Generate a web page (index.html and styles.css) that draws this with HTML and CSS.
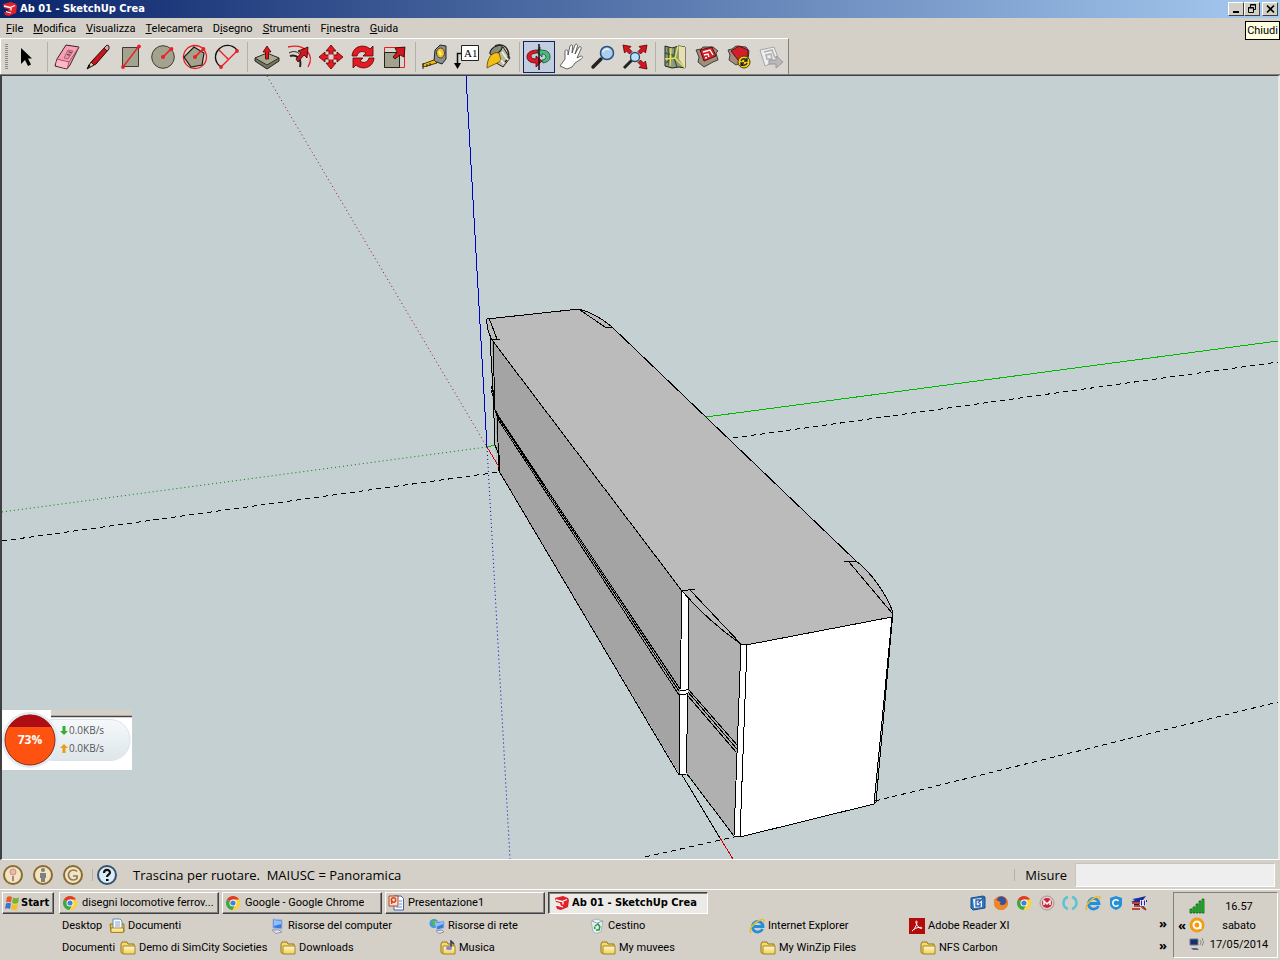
FILE: index.html
```html
<!DOCTYPE html>
<html lang="it">
<head>
<meta charset="utf-8">
<title>Ab 01 - SketchUp Crea</title>
<link rel="stylesheet" href="styles.css">
</head>
<body>
<svg class="defs" aria-hidden="true">
  <defs>
    <linearGradient id="folderFill" x1="0" y1="0" x2="0" y2="1"><stop offset="0" stop-color="#fffbd0"/><stop offset="1" stop-color="#f0cf58"/></linearGradient>
    <linearGradient id="pill" x1="0" y1="0" x2="0" y2="1"><stop offset="0" stop-color="#f6f9fb"/><stop offset="1" stop-color="#dde6ea"/></linearGradient>
  </defs>
  <symbol id="sketchup" viewBox="0 0 16 16">
    <path d="M1 3l8-2 5 2 1 2-1 7-7 3-4-1-1-3 5 0-1-3-4-1z" fill="#e0202a"/>
    <path d="M2 5l6 1.500 5-2M4 10.500l5 1.500M9 7v2.500" fill="none" stroke="#fff" stroke-width="1.300"/>
  </symbol>
  <symbol id="chrome" viewBox="0 0 16 16">
    <circle cx="8" cy="8" r="7" fill="#fbd43b"/>
    <path d="M8 8L1.900 4.500A7 7 0 0 1 14.100 4.500z" fill="#de3a2d"/>
    <path d="M8 8L1.900 4.500A7 7 0 0 0 7.500 15l3.500-6z" fill="#3fa648"/>
    <path d="M8 4.500h6.100A7 7 0 0 1 7.500 15L11 9z" fill="#fbd43b"/>
    <circle cx="8" cy="8" r="3.500" fill="#fff"/><circle cx="8" cy="8" r="2.600" fill="#3f82d8"/>
  </symbol>
  <symbol id="folder" viewBox="0 0 16 16">
    <path d="M1 4l1-2h5l1 2h6v9.500H2L1 12z" fill="#f3d873" stroke="#9a7412"/>
    <path d="M3 6h12v8H3z" fill="url(#folderFill)" stroke="#a88420"/>
  </symbol>
  <symbol id="docs" viewBox="0 0 16 16">
    <path d="M1 6h14v8H2z" fill="#e9c54e" stroke="#9a7412"/>
    <path d="M4 1h7l2 2v8H4z" fill="#fff" stroke="#6a86b4"/><path d="M6 4h5M6 6h5M6 8h5" stroke="#7ea0cf"/>
    <path d="M2 10h12.500v4.500H2z" fill="url(#folderFill)" stroke="#a88420"/>
  </symbol>
  <symbol id="music" viewBox="0 0 16 16">
    <use href="#folder"/><path d="M11 7V1l3 3" fill="none" stroke="#333a58" stroke-width="1.500"/><ellipse cx="9" cy="8" rx="3" ry="2" fill="#8d86c8"/>
  </symbol>
  <symbol id="computer" viewBox="0 0 16 16">
    <path d="M4 1l9 1v9l-9-1z" fill="#3f78e0" stroke="#9cb5dd"/><path d="M5 2l7 1v3L5 8z" fill="#8fc1ff"/>
    <path d="M3 12l7 0 3 2-6 1.500z" fill="#e4e8f0" stroke="#8b94a8"/><path d="M12 11l2-1v3l-1 1z" fill="#c4c8d4"/>
  </symbol>
  <symbol id="network" viewBox="0 0 16 16">
    <circle cx="5" cy="5.500" r="4.500" fill="#3b9ae0"/><path d="M2 3l4-1 1 4-3 2z" fill="#55b848"/>
    <path d="M6 4l9-1v7l-7 2z" fill="#3f78e0" stroke="#a8bede"/><path d="M7 5l7-1v2l-7 3z" fill="#8fc1ff"/><path d="M7 13l6-1 2 2-5 1.500z" fill="#e4e8f0" stroke="#8b94a8"/>
  </symbol>
  <symbol id="bin" viewBox="0 0 16 16">
    <path d="M2 3l5-2 7 2-2 11-5 1.500-3-2z" fill="#e6efef" stroke="#a6b8ba"/><path d="M3 3l5 2 6-2" fill="#fff" stroke="#8fa3a6"/>
    <path d="M6 8l3-2 2 3M11 8l-1 4H7M6 11L5.500 8.500" fill="none" stroke="#229a3c" stroke-width="1.500"/>
  </symbol>
  <symbol id="ie" viewBox="0 0 16 16">
    <path d="M13.500 11A5.300 5.300 0 1 1 14 8.500H5" fill="none" stroke="#238fd8" stroke-width="2.800"/>
    <path d="M2 15C-1 12 4 5 11 2c3-1.300 5-.5 3.500 2.500" fill="none" stroke="#edbb27" stroke-width="1.500"/>
  </symbol>
  <symbol id="adobe" viewBox="0 0 16 16">
    <path d="M0 0h16v16H0z" fill="#b30b0b"/><path d="M3 13c2-1 5-6 5-9 0-2-1.500-1-1 1 1 3 3 5 5 5.500 2 0 1-1.500-1-1.200-3 .2-6 1.200-8 3.700z" fill="none" stroke="#fff"/>
  </symbol>
  <symbol id="ppt" viewBox="0 0 16 16">
    <path d="M6 1h7l2.500 2.500V15H6z" fill="#fff" stroke="#3d64a8"/><path d="M8 12h6M11 6h3M11 9h3" stroke="#5c8ad0"/>
    <path d="M1 1h9v10H1z" fill="#f7e3d5" stroke="#b8401c"/><circle cx="5.500" cy="5" r="2.200" fill="none" stroke="#cc4b22" stroke-width="1.500"/><path d="M3.700 5v4" stroke="#cc4b22" stroke-width="1.500"/>
  </symbol>
  <symbol id="winflag" viewBox="0 0 16 16">
    <path d="M3 2c2-1 3-1 5 0L7 7.500c-2-1-3-1-5 0z" fill="#e55b27"/><path d="M9 2.500c2 1 4 1 6 0L14 8c-2 1-4 1-6 0z" fill="#76b531"/>
    <path d="M2 8.500c2-1 3-1 5 0L6 14c-2-1-3-1-5 0z" fill="#3d74d4"/><path d="M8 9c2 1 4 1 6 0l-1 5.500c-2 1-4 1-6 0z" fill="#f1c02b"/>
  </symbol>
</svg>

<header class="titlebar">
  <svg class="i16"><use href="#sketchup"/></svg>
  <h1>Ab 01 - SketchUp Crea</h1>
  <div class="winbtns">
    <button aria-label="Riduci a icona"><svg viewBox="0 0 14 12"><path d="M4 9h6" stroke="#000" stroke-width="2"/></svg></button>
    <button aria-label="Ripristina"><svg viewBox="0 0 14 12"><path d="M5 2h6M3 5h6" stroke="#000"/><path d="M5.500 4V1.500h5v5H9M3.500 4.500h5v5h-5z" fill="none" stroke="#000"/></svg></button>
    <button class="close" aria-label="Chiudi"><svg viewBox="0 0 14 12"><path d="M4 2.500l7 7M11 2.500l-7 7" stroke="#000" stroke-width="1.700"/></svg></button>
    <span class="tip" role="tooltip">Chiudi</span>
  </div>
</header>

<nav class="menubar">
  <button><u>F</u>ile</button><button><u>M</u>odifica</button><button><u>V</u>isualizza</button><button><u>T</u>elecamera</button><button>D<u>i</u>segno</button><button><u>S</u>trumenti</button><button>F<u>i</u>nestra</button><button><u>G</u>uida</button>
</nav>

<div class="toolrow">
<div class="toolbar" role="toolbar">
  <span class="grip"></span>
  <button aria-label="Seleziona"><svg viewBox="0 0 32 32"><path d="M10 7v16l4-4 3 6 3-1.500-3-6h4z"/></svg></button>
  <i class="sep"></i>
  <button aria-label="Gomma"><svg viewBox="0 0 32 32"><path d="M15 4l13 2-9 18-3 4-12-3 2-7z" fill="#f8a0b4" stroke="#3a2028"/><path d="M6 18l12 3 10-15M18 21l-2 7" fill="none" stroke="#a85068"/><path d="M6 19l11 2.500-1.500 6L5 24.500z" fill="#ffb8c8"/><path d="M17 9l5 1-5 8-4-1z" fill="#e890a6" stroke="#885060" stroke-width=".7"/><path d="M17.500 11l3 .6M16 13.500l3 .6" stroke="#502838"/></svg></button>
  <button aria-label="Matita"><svg viewBox="0 0 32 32"><path d="M5 27l4-7L23 5l3 3-13 15z" fill="#c8141c" stroke="#2c0a0a"/><path d="M4 28l4-7 3 3z" fill="#e8c890" stroke="#222"/><path d="M4 28l3.500-3-2-1.500z"/><path d="M21 7l3-3 2 1v3l-2 2z" fill="#e8a0a8" stroke="#222"/></svg></button>
  <button aria-label="Rettangolo"><svg viewBox="0 0 32 32"><path d="M7.500 6.500h16v19h-16z" fill="#a3a38d" stroke="#3c3c32"/><path d="M8 26L24 5" stroke="#ee1c24" stroke-width="1.300"/><circle cx="8" cy="26" r="1.900" fill="#ee1c24"/><circle cx="24" cy="5.500" r="1.900" fill="#ee1c24"/></svg></button>
  <button aria-label="Cerchio"><svg viewBox="0 0 32 32"><circle cx="16" cy="16" r="11.300" fill="#a3a38d" stroke="#3c3c32"/><path d="M16 16l8-8" stroke="#ee1c24" stroke-width="1.700"/><circle cx="16" cy="16" r="2" fill="#ee1c24"/><circle cx="24.500" cy="8" r="1.900" fill="#ee1c24"/></svg></button>
  <button aria-label="Poligono"><svg viewBox="0 0 32 32"><circle cx="16" cy="16" r="11.500" fill="none" stroke="#ee1c24" stroke-width="1.300"/><path d="M15 6l10 6-2 12-11 2-7-10z" fill="#a3a38d" stroke="#1c1c18" stroke-width="1.200"/><path d="M16 16l8-8" stroke="#ee1c24" stroke-width="1.700"/><circle cx="16" cy="16" r="2" fill="#ee1c24"/><circle cx="24.500" cy="8" r="1.900" fill="#ee1c24"/></svg></button>
  <button aria-label="Arco"><svg viewBox="0 0 32 32"><path d="M10 26C3 21 3 13 8 8c5-5 13-5 18 1" fill="none" stroke="#111" stroke-width="1.400"/><path d="M10 26L26 10M8 9l9 9" stroke="#ee1c24" stroke-width="1.400"/><circle cx="10" cy="26" r="1.900" fill="#ee1c24"/><circle cx="26" cy="10" r="1.900" fill="#ee1c24"/></svg></button>
  <i class="sep"></i>
  <button aria-label="Spingi/Tira"><svg viewBox="0 0 32 32"><path d="M4 17l12-4 12 4v3l-12 8-12-8z" fill="#74745f" stroke="#222"/><path d="M4 17l12-5 12 5-12 7z" fill="#a9a992" stroke="#33332a"/><path d="M14.500 18v-7H12l4-6 4 6h-2.500v7z" fill="#e01820" stroke="#500" stroke-width=".8"/></svg></button>
  <button aria-label="Offset"><svg viewBox="0 0 32 32"><path d="M5 6c17-4 27 8 20 20" fill="none" stroke="#ee1c24" stroke-width="1.300"/><path d="M7 15c7-2 12 3 10 11" fill="none" stroke="#222" stroke-width="2"/><path d="M6 12c5-3 10-1 12 3" fill="none" stroke="#222"/><path d="M13 18l5-6-3-2 10-4-1 11-3-3-6 7z" fill="#d01820" stroke="#300" stroke-width=".8"/></svg></button>
  <button aria-label="Sposta"><svg viewBox="0 0 32 32"><path d="M16 4l5 6h-3v4h4v-3l6 5-6 5v-3h-4v4h3l-5 6-5-6h3v-4h-4v3l-6-5 6-5v3h4v-4h-3z" fill="#e51a22" stroke="#500" stroke-width=".8"/><path d="M13.500 13.500h5v5h-5z" fill="#d9d6cf"/></svg></button>
  <button aria-label="Ruota"><svg viewBox="0 0 32 32"><path d="M5 15C6 4 18 3 23 8l3-3v10H16l3-3c-4-3-8-1-9 3z" fill="#e51a22" stroke="#500" stroke-width=".8"/><path d="M27 17c-1 11-13 12-18 7l-3 3V17h10l-3 3c4 3 8 1 9-3z" fill="#e51a22" stroke="#500" stroke-width=".8"/></svg></button>
  <button aria-label="Scala"><svg viewBox="0 0 32 32"><path d="M5.500 6.500h20v20h-20z" fill="none" stroke="#ee1c24"/><path d="M5.500 11.500h15v15h-15z" fill="#a3a38d" stroke="#222"/><path d="M14 16l4-5-2-4 10-1-1 10-4-2-5 4z" fill="#d01820" stroke="#300" stroke-width=".8"/></svg></button>
  <i class="sep"></i>
  <button aria-label="Metro"><svg viewBox="0 0 32 32"><path d="M16 9l5-5 6 1v13l-4 5-8-3z" fill="#8c8f92" stroke="#222"/><ellipse cx="21.500" cy="12" rx="4" ry="5" fill="#f6c51c" stroke="#444"/><path d="M20 10l2 4" stroke="#fff0a0" stroke-width="2"/><path d="M15 19L4 23v3l14-4z" fill="#eebc16" stroke="#4c3c00"/><path d="M4 22v6M8 23v3M11 22v3" stroke="#222"/></svg></button>
  <button aria-label="Testo"><svg viewBox="0 0 32 32"><path d="M10 12.500H6.500V24" fill="none" stroke="#111" stroke-width="1.500"/><path d="M3 22h7l-3.500 6z"/><path d="M10.500 4.500h17v15h-17z" fill="#fff" stroke="#222"/><text x="13" y="16" class="a1">A1</text></svg></button>
  <button aria-label="Secchiello"><svg viewBox="0 0 32 32"><path d="M10 11l10-5 7 11-7 9-10-6z" fill="#b8b89c" stroke="#222"/><ellipse cx="13" cy="9" rx="7" ry="3.500" transform="rotate(-35 13 9)" fill="#8a8a7a" stroke="#111"/><path d="M16 12c-7-2-12 5-12 15 4-3 11-4 14-8z" fill="#f4bf13" stroke="#5c4300" stroke-width=".8"/><path d="M12 5C24 0 30 15 22 21" fill="none" stroke="#222" stroke-width="1.500"/><path d="M19 11l6 8M18 19l3 4" stroke="#ececd8" stroke-width="2"/></svg></button>
  <i class="sep"></i>
  <button class="on" aria-label="Orbita" aria-pressed="true"><svg viewBox="0 0 32 32"><path d="M15 9C7 9 4 12 4 16c0 4 4 6 9 6v4l6-6-6-5v3c-3 0-5-1-5-3s3-3 7-3z" fill="#d91c2b" stroke="#600" stroke-width=".8"/><path d="M17 9c8 0 10 3 10 7 0 3-2 5-7 6l-1-3c3 0 4-2 4-3 0-2-2-3-4-3v3l-5-5 3-5z" fill="#4db87e" stroke="#0a4f2b" stroke-width=".8"/><path d="M16 3v26" stroke="#111" stroke-width="1.500"/></svg></button>
  <button aria-label="Panoramica"><svg viewBox="0 0 32 32"><path d="M5 25l5-7 0-8c1-2 3-1 3 1l0 3 2-9c1-2 3-1 2.500 1L17 12l3-8c1-2 3 0 2.500 1L20 13l4-7c1-1 3 0 2 2l-4 9 4-2c2 0 2 2 0 3l-6 4-3 4-5 2z" fill="#fff" stroke="#444" stroke-width=".8"/></svg></button>
  <button aria-label="Zoom"><svg viewBox="0 0 32 32"><path d="M14 18l-8 8" stroke="#222" stroke-width="3.500" stroke-linecap="round"/><circle cx="20" cy="12" r="6.500" fill="#a9cfed" stroke="#2c4d7d" stroke-width="1.500"/><path d="M16 11c1-3 4-4 6-2" fill="none" stroke="#e8f6ff" stroke-width="1.500"/></svg></button>
  <button aria-label="Zoom estensioni"><svg viewBox="0 0 32 32"><path id="outArrow" d="M4 4l8 1.500-2 2 3 3-2.500 2.500-3-3-2 2z" fill="#d8141e" stroke="#500" stroke-width=".8"/><use href="#outArrow" transform="matrix(-1 0 0 1 32 0)"/><use href="#outArrow" transform="rotate(180 16 16)"/><path d="M13 19l-8 8" stroke="#222" stroke-width="3"/><circle cx="16" cy="16" r="4.500" fill="#b8e0f6" stroke="#2a4870" stroke-width="1.300"/></svg></button>
  <i class="sep"></i>
  <button aria-label="Aggiungi posizione"><svg viewBox="0 0 32 32"><path d="M6 5l7 2 7-2 6 1v21l-6-1-7 1-7-2z" fill="#8f9c80" stroke="#222"/><path d="M20 5l6 1v21l-6-9z" fill="#e7dfad"/><path d="M6 12l8 2 4 12M9 6l1 19M16 6l-1 9-8 7" fill="none" stroke="#3a5c3a" stroke-width="1.300"/><path d="M19 5l-3 12 10 10M6 18l10-1M12 7l-1 18" fill="none" stroke="#f0df55" stroke-width="1.300"/></svg></button>
  <button aria-label="3D Warehouse"><svg viewBox="0 0 32 32"><path d="M5 9l5-1 2-2 10 0 5 4-2 2 2 7-5 2-9 5-6-5 1-5z" fill="#a48c7c" stroke="#222" stroke-width=".8"/><path d="M9 9l12-3 4 9-12 5z" fill="#d2202a" stroke="#400" stroke-width=".8"/><path d="M12 11l7-2 3 5M13 14l4-1 1 3M14 17l2-.5" fill="none" stroke="#fff" stroke-width="1.400"/></svg></button>
  <button aria-label="Extension Warehouse"><svg viewBox="0 0 32 32"><path d="M5 9l4-1 4-3 10 1 3 4-1 9-12 5-7-5 1-5z" fill="#a48c7c" stroke="#222" stroke-width=".8"/><path d="M8 10l8-5 9 4v6l-10 4z" fill="#d2202a" stroke="#400" stroke-width=".8"/><circle cx="21" cy="21" r="6" fill="#f7cf16" stroke="#4c3c00"/><path d="M18 20c1-3 5-3 6 0M24 22c-1 3-5 3-6 0M24 17v3h-3M18 25v-3h3" fill="none" stroke="#222" stroke-width="1.300"/></svg></button>
  <button aria-label="Invia a LayOut" disabled><svg viewBox="0 0 32 32"><path d="M5 9l14-3 5 13-14 6z" fill="#eee" stroke="#a5a5a5"/><path d="M9 11l8-2 3 8M11 14l5-1 1 5h-5z" fill="none" stroke="#b0b0b0" stroke-width="1.500"/><path d="M14 19h7v-4l7 6-7 6v-4h-7z" fill="#b9b9b9" stroke="#999"/></svg></button>
</div>
</div>

<main class="viewport">
  <svg class="scene" viewBox="2 76 1276 783" preserveAspectRatio="xMidYMid slice" role="img" aria-label="Modello 3D">
    <g class="axis">
      <path class="dot" d="M267 76L487 447" stroke="#a01020"/>
      <path class="dot" d="M2 512L487 447" stroke="#008000"/>
      <path class="dot" d="M487 447L510 859" stroke="#0000b0"/>
      <path d="M466 76L487 447" stroke="#0000c8"/>
      <path d="M706 417L1278 341M487 447L495 445" stroke="#00b800"/>
      <path class="dash" d="M2 541L499 472M733 438L1278 362M645 857L734 837M875 801L1278 702" stroke="#000"/>
      <path d="M682 775L720 838" stroke="#000"/>
      <path d="M720 838L733 859" stroke="#c80000"/>
    </g>
    <g class="faces">
      <path d="M490 337L497 345V468L495 447L492 390z" fill="#b4bcbc"/>
      <path d="M492 340L682 591L680 775L499 471L495 412z" fill="#a4a4a4"/>
      <path d="M689 599L741 644L735 837L687 774z" fill="#b0b0b0"/>
      <path d="M487 319L579 309Q597 314 612 327L855 560Q880 580 893 612L892 617L746 645L741 644Q708 621 682 591L492 340Q486 328 487 319z" fill="#bbb"/>
      <path d="M682 591L689 599L688 690L686 774L679 775L680 690z" fill="#fff"/>
      <path d="M741 644L747 645L892 617L874 804L740 837L734 836z" fill="#fff"/>
    </g>
    <g class="edges">
      <path d="M487 319L579 309Q597 314 612 327L855 560Q880 580 893 612L892 617L746 645L741 644Q708 621 682 591L492 340Q486 328 487 319z"/>
      <path d="M580 310L605 327H612M489 318L497 339M492 340L500 339M682 591L695 589M690 590L741 644M844 562L856 561M849 562L892 613"/>
      <path d="M490 338L493 390L495 445L499 455V471M493 341L495 410L497 413L499 471M491 386L495 398M491 390L495 402"/>
      <path d="M499 471L679 775L686 774M687 774L734 836L740 837L874 804L876 802L893 612M892 617L874 804"/>
      <path d="M682 591L680 690M689 599L688 690M679 694V775M688 694L686 774M679 694Q683 696 688 693M680 690Q684 692 688 689"/>
      <path d="M741 644L734 836M747 645L740 837"/>
      <path d="M495 411L680 689M496 414L679 691M497 418L679 695M688 689L738 746M688 692L737 749M688 696L736 752"/>
    </g>
    <path class="origin" d="M487 447L499 467"/>
  </svg>
  <aside class="meter">
    <svg viewBox="0 0 130 60" aria-hidden="true">
      <path d="M0 0h130v60H0z" fill="#fff"/><path d="M49 0h81v6H49z" fill="#d4d0c8"/><path d="M49 6.500h81" stroke="#444" stroke-width="1.500"/>
      <rect x="32" y="9.500" width="96" height="41" rx="20" fill="url(#pill)" stroke="#dce4e8"/>
      <circle cx="28" cy="30" r="28" fill="#e1eaee"/><circle cx="28" cy="30" r="25" fill="#fe5310" stroke="#96261a"/>
      <path d="M6.500 17A25 25 0 0 1 49.500 17z" fill="#ad0d13"/>
      <path d="M62 25l-4-4h2.500v-5h3v5H66z" fill="#36ad2f"/><path d="M62 34l-4 4h2.500v5h3v-5H66z" fill="#eb9c19"/>
    </svg>
    <strong>73%</strong>
    <p>0.0KB/s</p><p>0.0KB/s</p>
  </aside>
</main>

<footer class="status">
  <button aria-label="Geolocalizzazione"><svg viewBox="0 0 22 22"><circle cx="11" cy="11" r="9" fill="#f2e3c2" stroke="#8a6b32" stroke-width="2"/><path d="M11 17v-5" stroke="#a58c78" stroke-width="2"/><circle cx="11" cy="8" r="3" fill="#eeb8a4" stroke="#c49488"/></svg></button>
  <button aria-label="Attribuzione"><svg viewBox="0 0 22 22"><circle cx="11" cy="11" r="9" fill="#f2e3c2" stroke="#8a6b32" stroke-width="2"/><circle cx="11" cy="6" r="2" fill="#7c837f"/><path d="M8 9h6v5h-1v4H9v-4H8z" fill="#7c837f"/></svg></button>
  <button aria-label="Accedi"><svg viewBox="0 0 22 22"><circle cx="11" cy="11" r="9" fill="#f2e3c2" stroke="#8a6b32" stroke-width="2"/><path d="M15 7.500a5 5 0 1 0 0 7V12h-4" fill="none" stroke="#8c7a5a" stroke-width="1.700"/></svg></button>
  <i class="bar"></i>
  <button aria-label="Guida"><svg viewBox="0 0 22 22"><circle cx="11" cy="11" r="9" fill="#d9ecf8" stroke="#34526e" stroke-width="2"/><path d="M8 9c0-4 6-4 6-.5 0 2-3 2.200-3 4.500" fill="none" stroke="#111" stroke-width="2.200"/><path d="M10 15h2.500v2H10z"/></svg></button>
  <span class="hint">Trascina per ruotare.&nbsp; MAIUSC = Panoramica</span>
  <i class="bar"></i>
  <label for="measure">Misure</label>
  <input id="measure" type="text">
</footer>

<footer class="taskbar">
  <button class="start"><svg class="i16"><use href="#winflag"/></svg>Start</button>
  <div class="bands">
    <div class="tasks">
      <button><svg class="i16"><use href="#chrome"/></svg><span>disegni locomotive ferrov...</span></button>
      <button><svg class="i16"><use href="#chrome"/></svg><span>Google - Google Chrome</span></button>
      <button><svg class="i16"><use href="#ppt"/></svg><span>Presentazione1</span></button>
      <button class="active"><svg class="i16"><use href="#sketchup"/></svg><span>Ab 01 - SketchUp Crea</span></button>
      <div class="quick">
        <svg class="i16" viewBox="0 0 16 16"><path d="M1 3l12-2 2 1v11l-12 2-2-2z" fill="#2b78c2" stroke="#1c4c84"/><path d="M3 4l9-1v9l-8 1z" fill="#e8f3fc"/><path d="M11 5H6v6h4V8M8 8l6-6" stroke="#2b5ca8" stroke-width="1.300" fill="none"/></svg>
        <svg class="i16" viewBox="0 0 16 16"><circle cx="8" cy="8" r="7" fill="#e5641c"/><circle cx="8.500" cy="6" r="4.500" fill="#2d55a0"/><path d="M1 4c2 1 4 2 7 3-2 1-1 3 1 3 3 0 5-1 5-4 2 5-2 9-6 9C3 15 0 10 1 4z" fill="#f0852a"/></svg>
        <svg class="i16"><use href="#chrome"/></svg>
        <svg class="i16" viewBox="0 0 16 16"><circle cx="8" cy="8" r="7" fill="#e2c9ca" stroke="#a89494"/><circle cx="8" cy="8" r="5" fill="#c4283a"/><path d="M5 10V6l3 3 3-3v4" fill="none" stroke="#fff" stroke-width="1.500"/></svg>
        <svg class="i16" viewBox="0 0 16 16"><path d="M6 2C0 4 0 12 6 14M10 2c6 2 6 10 0 12" fill="none" stroke="#56c4d2" stroke-width="2.500"/></svg>
        <svg class="i16"><use href="#ie"/></svg>
        <svg class="i16" viewBox="0 0 16 16"><path d="M8 1l6 2v6c0 3-3 5-6 6-3-1-6-3-6-6V3z" fill="#2390d8"/><path d="M10.500 6a3.200 3.200 0 1 0 0 4" fill="none" stroke="#fff" stroke-width="1.600"/></svg>
        <svg class="i16" viewBox="0 0 16 16"><path d="M1 4l6-1 8-2-3 4h4v2H0l4-2z" fill="#1c2a9c"/><path d="M1 8h8l6 7M3 11h6M1 14h8" stroke="#b01818" stroke-width="1.500" fill="none"/><path d="M3 9.500h5l5 5" stroke="#222" fill="none"/><path d="M9 5h6v6H9z" fill="#fff"/><path d="M10.500 5.500v5M13.500 5.500v5" stroke="#1c2a9c" stroke-width="1.300"/></svg>
      </div>
    </div>
    <nav class="links desk">
      <b>Desktop</b>
      <a href="#"><svg class="i16"><use href="#docs"/></svg>Documenti</a><a href="#"><svg class="i16"><use href="#computer"/></svg>Risorse del computer</a><a href="#"><svg class="i16"><use href="#network"/></svg>Risorse di rete</a><a href="#"><svg class="i16"><use href="#bin"/></svg>Cestino</a><a href="#"><svg class="i16"><use href="#ie"/></svg>Internet Explorer</a><a href="#"><svg class="i16"><use href="#adobe"/></svg>Adobe Reader XI</a>
      <button class="more" aria-label="Altro">»</button>
    </nav>
    <nav class="links docs">
      <b>Documenti</b>
      <a href="#"><svg class="i16"><use href="#folder"/></svg>Demo di SimCity Societies</a><a href="#"><svg class="i16"><use href="#folder"/></svg>Downloads</a><a href="#"><svg class="i16"><use href="#music"/></svg>Musica</a><a href="#"><svg class="i16"><use href="#folder"/></svg>My muvees</a><a href="#"><svg class="i16"><use href="#folder"/></svg>My WinZip Files</a><a href="#"><svg class="i16"><use href="#folder"/></svg>NFS Carbon</a>
      <button class="more" aria-label="Altro">»</button>
    </nav>
  </div>
  <div class="tray">
    <button class="more" aria-label="Mostra icone nascoste">«</button>
    <div class="trayicons">
      <svg class="i16" viewBox="0 0 16 16"><path d="M1 11h2v4H1zM4 9h2v6H4zM7 6h2v9H7zM10 3h2v12h-2zM13 1h2v14h-2z" fill="#1fd02c" stroke="#0a5c12" stroke-width=".8"/></svg>
      <svg class="i16" viewBox="0 0 16 16"><circle cx="8" cy="8" r="7.500" fill="#f59b12"/><circle cx="8" cy="8" r="3.500" fill="none" stroke="#fff" stroke-width="2"/><path d="M11.500 6v6" stroke="#fff" stroke-width="2"/></svg>
      <svg class="i16" viewBox="0 0 16 16"><path d="M1 3h8v6H1z" fill="#1b2e6c" stroke="#6b7894"/><path d="M2 12h6l2 2H4z" fill="#5a6784"/><path d="M11 4q2 2 0 5M13 2q3 4 0 8" fill="none" stroke="#888"/></svg>
    </div>
    <div class="clock"><time>16.57</time><span>sabato</span><span>17/05/2014</span></div>
  </div>
</footer>
</body>
</html>
```
FILE: styles.css
```css
* { box-sizing: border-box; }
body {
  margin: 0;
  min-height: 100vh;
  display: flex;
  flex-direction: column;
  background: #d4d0c8;
  color: #000;
  font: 11px/14px Roboto, "DejaVu Sans", sans-serif;
}
button { font: inherit; color: inherit; background: none; border: 0; padding: 0; }
a { color: inherit; text-decoration: none; }
p { margin: 0; }
.defs { position: absolute; width: 0; height: 0; }
.i16 { width: 16px; height: 16px; flex: none; }

.titlebar {
  height: 18px;
  display: flex;
  align-items: center;
  gap: 2px;
  padding: 0 2px;
  background: linear-gradient(90deg, #0a246a, #a6caf0);
  color: #fff;
}
.titlebar h1 { margin: 0; font: bold 11px/16px "DejaVu Sans Condensed", "DejaVu Sans", sans-serif; }
.winbtns { position: relative; margin-left: auto; display: flex; }
.winbtns button {
  width: 16px;
  height: 14px;
  background: #d4d0c8;
  border: 1px solid;
  border-color: #fff #404040 #404040 #fff;
}
.winbtns svg { display: block; width: 100%; height: 100%; }
.winbtns .close { margin-left: 2px; }
.tip {
  position: absolute;
  top: 19px;
  right: -2px;
  padding: 2px 1px 1px;
  border: 1px solid #000;
  background: #ffffe1;
  color: #000;
}

.menubar { display: flex; gap: 10px; height: 20px; padding: 2px 6px 0; align-items: center; }
.menubar u { text-underline-offset: 1px; }

.toolrow { display: flex; height: 37px; border-bottom: 1px solid #808080; }
.toolbar {
  display: flex;
  align-items: center;
  padding: 0 1px 0 4px;
  border-top: 1px solid #fff;
  border-left: 1px solid #fff;
  border-right: 1px solid #808080;
  background: #d9d6cf;
}
.grip {
  width: 3px;
  height: 26px;
  margin-right: 3px;
  background: repeating-linear-gradient(#8c8980 0 1px, #d9d6cf 1px 2px);
}
.toolbar button { width: 32px; height: 32px; }
.toolbar button svg { display: block; width: 100%; height: 100%; }
.toolbar .on { background: #c3cde0; box-shadow: inset 0 0 0 1px #0a246a; }
.sep { width: 8px; height: 30px; background: linear-gradient(90deg, #d9d6cf 4px, #b4b1a9 4px 5px, #d9d6cf 5px); }
.a1 { font: 11px "Liberation Serif", serif; }

.viewport {
  position: relative;
  flex: 1;
  min-height: 300px;
  border: solid #404040;
  border-width: 1px 0 0 2px;
  border-right: 2px solid #eceae6;
  border-bottom: 1px solid #fff;
  background: #c4d0d2;
}
.scene { position: absolute; width: 100%; height: 100%; shape-rendering: crispEdges; }
.axis, .edges, .origin { fill: none; }
.dot { stroke-dasharray: 1 3; shape-rendering: auto; }
.dash { stroke-dasharray: 5 4; }
.edges { stroke: #000; }
.origin { stroke: #d00000; }
.meter {
  position: absolute;
  left: 0;
  bottom: 89px;
  width: 130px;
  height: 60px;
  padding: 11px 0 0 67px;
  font: 10px/18px "Open Sans", sans-serif;
  color: #555;
}
.meter svg { position: absolute; inset: 0; }
.meter p { position: relative; }
.meter strong {
  position: absolute;
  left: 0;
  top: 21px;
  width: 56px;
  text-align: center;
  font-size: 12px;
  color: #fff;
}

.status {
  display: flex;
  align-items: center;
  height: 29px;
  padding: 0 5px 0 2px;
  font: 13px/20px "Open Sans", "Noto Sans", sans-serif;
}
.status button { width: 22px; height: 22px; margin-right: 8px; }
.status button svg { display: block; }
.status .bar { width: 1px; height: 12px; background: #b4b0a8; margin-right: 3px; }
.status .hint { margin: 0 auto 0 7px; }
.status .bar + label { margin: 0 8px 0 7px; }
.status input {
  width: 200px;
  height: 24px;
  border: 1px solid;
  border-color: #c8c4bc #fff #fff #c8c4bc;
  background: #eee;
}

.taskbar {
  display: flex;
  align-items: flex-start;
  gap: 5px;
  height: 71px;
  padding: 2px 2px 0;
  border-top: 1px solid #fff;
}
.start, .tasks button {
  display: flex;
  align-items: center;
  height: 22px;
  background: #d4d0c8;
  border: 1px solid;
  border-color: #fff #404040 #404040 #fff;
  box-shadow: inset -1px -1px 0 #808080;
}
.start {
  width: 52px;
  gap: 1px;
  padding-left: 1px;
  font: bold 11px/14px "DejaVu Sans Condensed", sans-serif;
}
.bands { flex: 1; min-width: 0; }
.tasks { display: flex; gap: 3px; }
.tasks button { flex: 0 1 160px; min-width: 0; gap: 4px; padding: 0 2px; white-space: nowrap; }
.tasks button span { overflow: hidden; text-overflow: ellipsis; }
.tasks .active {
  gap: 2px;
  padding-left: 5px;
  border-color: #404040 #fff #fff #404040;
  background: #eceae6;
  box-shadow: inset 1px 1px 0 #808080;
  font: bold 11px/14px "DejaVu Sans Condensed", sans-serif;
}
.quick { display: flex; align-items: center; gap: 7px; margin: 0 21px 0 auto; }
.links { display: flex; align-items: center; height: 22px; padding: 1px 0 0 3px; white-space: nowrap; }
.links b { flex: none; width: 47px; font-weight: normal; }
.links.docs b { width: 58px; }
.links a { display: flex; align-items: center; gap: 3px; flex: 0 1 160px; min-width: 0; overflow: hidden; }
.more { font: bold 13px/14px "Open Sans", sans-serif; }
.links .more { margin: 0 1px 6px auto; }
.tray {
  display: flex;
  align-items: center;
  gap: 3px;
  height: 66px;
  padding: 0 7px 0 4px;
  border: 1px solid;
  border-color: #808080 #fff #fff #808080;
}
.trayicons { display: grid; gap: 3px; }
.clock { display: grid; width: 62px; line-height: 19px; text-align: center; }
```
